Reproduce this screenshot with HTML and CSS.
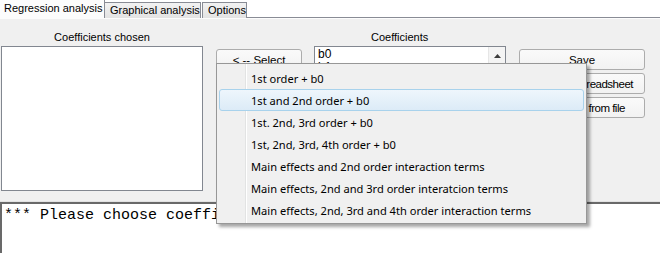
FILE: index.html
```html
<!DOCTYPE html>
<html>
  <head>
    <meta charset="UTF-8">
    <title>Regression analysis</title>
    <link rel="stylesheet" href="styles.css">
  </head>
  <body>
    <div class="window">
      <div class="tabs">
        <div class="tab active">Regression analysis</div>
        <div class="tab">Graphical analysis</div>
        <div class="tab">Options</div>
        <div class="tab-fill"></div>
      </div>
      <div class="panel">
        <div class="col col-chosen">
          <label class="caption center">Coefficients chosen</label>
          <div class="listbox tall"></div>
        </div>
        <div class="col col-select">
          <button type="button" class="btn">&lt; -- Select</button>
        </div>
        <div class="col col-coef">
          <label class="caption coef-caption">Coefficients</label>
          <div class="listbox tall">
            <div class="list-item">b0</div>
            <div class="list-item">b1</div>
            <div class="scroll-up">
              <svg width="7" height="4" viewBox="0 0 7 4"><path d="M0 4 L3.5 0 L7 4 Z" fill="#3c3c3c"/></svg>
            </div>
          </div>
        </div>
        <div class="col col-actions">
          <button type="button" class="btn">Save</button>
          <button type="button" class="btn tight">Export to spreadsheet</button>
          <button type="button" class="btn tight">Load data from file</button>
        </div>
      </div>
      <div class="memo">*** Please choose coefficients ***</div>

      <div class="menu">
        <div class="menu-item">1st order + b0</div>
        <div class="menu-item hover">1st and 2nd order + b0</div>
        <div class="menu-item">1st. 2nd, 3rd order + b0</div>
        <div class="menu-item">1st, 2nd, 3rd, 4th order + b0</div>
        <div class="menu-item">Main effects and 2nd order interaction terms</div>
        <div class="menu-item">Main effects, 2nd and 3rd order interatcion terms</div>
        <div class="menu-item">Main effects, 2nd, 3rd and 4th order interaction terms</div>
      </div>
    </div>
  </body>
</html>
```

FILE: styles.css
```css
* {
  box-sizing: border-box;
}
body {
  margin: 0;
  background-color: #FFFFFF;
  font-family: "Liberation Sans", Arial, sans-serif;
  font-size: 11px;
  color: #000;
}
.window {
  position: relative;
  width: 660px;
  height: 253px;
  overflow: hidden;
  display: flex;
  flex-direction: column;
}
.tabs {
  display: flex;
  align-items: flex-end;
  height: 18px;
}
.tab {
  height: 16px;
  line-height: 14px;
  padding: 0 5px;
  border: 1px solid #898c95;
  border-bottom: none;
  border-left: none;
  background: linear-gradient(#f2f2f2, #e3e3e3);
  white-space: nowrap;
}
.tab.active {
  height: 18px;
  line-height: 16px;
  width: 105px;
  padding-left: 4px;
  border: none;
  border-right: 1px solid #898c95;
  background: #fcfcfc;
}
.tab:nth-child(2) {
  width: 96px;
}
.tab:nth-child(3) {
  margin-left: 1px;
  border-left: 1px solid #898c95;
  width: 45px;
}
.tab-fill {
  flex: 1;
  border-bottom: 1px solid #898c95;
}
.panel {
  height: 184px;
  background-color: #f0f0f0;
  border-top: 1px solid #fcfcfc;
  border-bottom: 1px solid #e2e2e2;
  display: flex;
  padding: 0 0 0 1px;
}
.col {
  display: flex;
  flex-direction: column;
}
.col-chosen {
  width: 202px;
}
.col-select {
  width: 86px;
  margin-left: 13px;
  padding-top: 30px;
}
.col-coef {
  width: 192px;
  margin-left: 12px;
}
.col-actions {
  width: 126px;
  margin-left: 13px;
  padding-top: 30px;
  gap: 3px;
}
.caption {
  height: 27px;
  padding-top: 12px;
  line-height: 13px;
}
.caption.center {
  text-align: center;
}
.coef-caption {
  padding-left: 57px;
}
.listbox {
  position: relative;
  background: #fff;
  border: 1px solid #828790;
  padding: 1px 3px;
}
.tall {
  height: 145px;
}
.list-item {
  height: 13px;
  line-height: 13px;
  font-size: 12px;
}
.scroll-up {
  position: absolute;
  top: 0;
  right: 0;
  width: 17px;
  height: 17px;
  background: #f4f4f4;
  border-left: 1px solid #e6e6e6;
  display: flex;
  align-items: center;
  justify-content: center;
}
.btn {
  height: 21px;
  font-family: inherit;
  font-size: 11.5px;
  color: #000;
  background: linear-gradient(#fafafa, #f2f2f2);
  border: 1px solid #acacac;
  border-radius: 3px;
  padding: 0;
  white-space: nowrap;
  overflow: hidden;
}
.btn.tight {
  letter-spacing: -0.5px;
}
.memo {
  flex: 1;
  background: #fff;
  border-top: 2px solid #696969;
  border-left: 2px solid #696969;
  padding: 3px 2px;
  font-family: "Liberation Mono", "Courier New", monospace;
  font-size: 15px;
  line-height: 18px;
  white-space: pre;
}
.menu {
  position: absolute;
  left: 216px;
  top: 63px;
  width: 371px;
  height: 161px;
  padding: 3px 2px;
  background: #f0f0f0 linear-gradient(to right, transparent 28px, #e2e3e3 28px, #e2e3e3 29px, #ffffff 29px, #ffffff 30px, transparent 30px);
  border: 1px solid #979797;
  box-shadow: 3px 3px 3px rgba(0, 0, 0, 0.35);
  font-family: "Noto Sans", "Open Sans", sans-serif;
  font-size: 11.1px;
}
.menu-item {
  height: 22px;
  line-height: 21px;
  padding-left: 31px;
  border: 1px solid transparent;
  border-radius: 3px;
  white-space: nowrap;
}
.menu-item.hover {
  background: linear-gradient(#eef6fc, #dcebf7);
  border-color: #a8d2ec;
}
```
